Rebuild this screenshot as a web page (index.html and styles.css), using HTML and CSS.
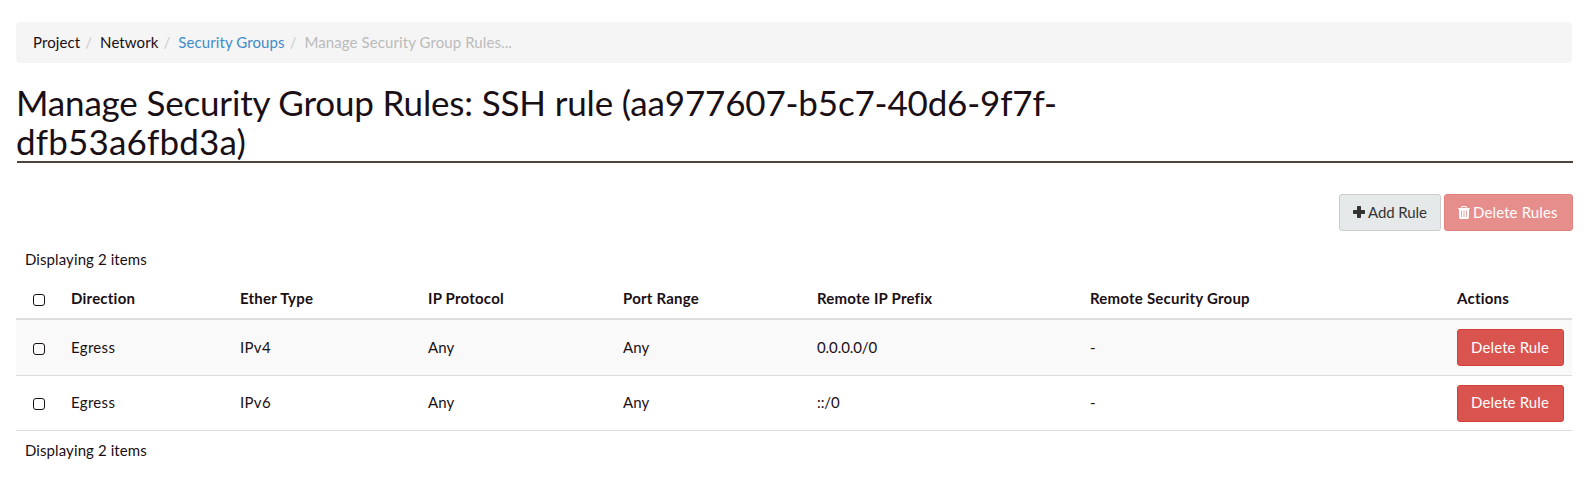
FILE: index.html
```html
<!DOCTYPE html>
<html lang="en">
<head>
<meta charset="utf-8">
<title>Manage Security Group Rules</title>
<link rel="stylesheet" href="styles.css">
</head>
<body>
<ol class="breadcrumb">
  <li>Project</li>
  <li>Network</li>
  <li><a href="#">Security Groups</a></li>
  <li class="active">Manage Security Group Rules...</li>
</ol>
<header class="page-header">
  <h1><span class="title-main">Manage Security Group Rules: SSH rule (aa977607-b5c7-40d6-9f7f-</span><span class="title-rest">dfb53a6fbd3a)</span></h1>
</header>
<div class="table-actions">
  <button class="btn btn-default"><svg class="icon-plus" viewBox="0 0 12 12"><path d="M4.8 0h2.4q.8 0 .8.8V4h3.2q.8 0 .8.8v2.4q0 .8-.8.8H8v3.200q0 .8-.8.8H4.800q-.8 0-.8-.8V8H.8Q0 8 0 7.200V4.800Q0 4 .8 4H4V.8Q4 0 4.800 0z"/></svg><span>Add Rule</span></button>
  <button class="btn btn-danger btn-delete-all" disabled><svg class="icon-trash" viewBox="0 0 12 13"><path fill-rule="evenodd" d="M4.300 0h3.400q.6 0 .8.500L9 2h2.600q.4 0 .4.400V3H11v8.300Q11 13 9.500 13h-7Q1 13 1 11.300V3H0v-.6Q0 2 .4 2H3L3.500.5Q3.700 0 4.300 0zM4.400 1 4 2h4l-.4-1zM3.200 4.500V11h.8V4.500zm2.400 0V11h.8V4.500zm2.400 0V11h.8V4.500z"/></svg><span>Delete Rules</span></button>
</div>
<div class="table-info table-info-top">Displaying 2 items</div>
<table class="rules">
  <colgroup><col class="col-check"><col class="col-direction"><col class="col-ether"><col class="col-protocol"><col class="col-port"><col class="col-prefix"><col class="col-group"><col class="col-actions"></colgroup>
  <thead>
    <tr><th><span class="check"></span></th><th>Direction</th><th>Ether Type</th><th>IP Protocol</th><th>Port Range</th><th>Remote IP Prefix</th><th>Remote Security Group</th><th>Actions</th></tr>
  </thead>
  <tbody>
    <tr class="odd"><td><span class="check"></span></td><td class="label">Egress</td><td class="label">IPv4</td><td>Any</td><td>Any</td><td class="address">0.0.0.0/0</td><td>-</td><td><button class="btn btn-danger">Delete Rule</button></td></tr>
    <tr class="even"><td><span class="check"></span></td><td class="label">Egress</td><td class="label">IPv6</td><td>Any</td><td>Any</td><td class="address">::/0</td><td>-</td><td class="action"><button class="btn btn-danger">Delete Rule</button></td></tr>
  </tbody>
</table>
<div class="table-info table-info-bottom">Displaying 2 items</div>
</body>
</html>
```
FILE: styles.css
```css
* { box-sizing: border-box; }
body {
  margin: 0;
  padding: 22px 15px 0 16px;
  background: #fff;
  color: #1a0f14;
  font: 15px/21px Lato, sans-serif;
  letter-spacing: .09px;
}
.breadcrumb {
  display: flex;
  height: 41px;
  margin: 0 1px 20px 0;
  padding: 10px 17px;
  list-style: none;
  background: #f5f5f5;
  border-radius: 4px;
}
.breadcrumb li + li::before {
  content: "/";
  padding: 0 8px 0 5px;
  color: #ccc;
}
.breadcrumb a { color: #428bca; text-decoration: none; }
.breadcrumb .active { color: #bbb; }
.page-header {
  height: 80px;
  margin-left: 1px;
  border-bottom: 2px solid #51443c;
}
h1 {
  margin: 0 0 0 -1px;
  font-size: 35px;
  font-weight: 400;
  line-height: 39px;
}
h1 span { display: block; }
.title-main { letter-spacing: -.17px; }
.title-rest { letter-spacing: .18px; }
.table-actions {
  display: flex;
  justify-content: flex-end;
  gap: 3px;
  margin-top: 31px;
}
.btn {
  display: flex;
  align-items: center;
  height: 37px;
  padding: 0 13px 1px;
  border: 1px solid;
  border-radius: 3px;
  font: inherit;
  letter-spacing: .13px;
  white-space: nowrap;
}
.btn-default { width: 102px; background: #e5e9ea; border-color: #ccc; color: #333; letter-spacing: -.08px; }
.btn-danger { background: #d9534f; border-color: #d43f3a; color: #fff; }
.btn-danger:disabled { opacity: .65; }
.btn-delete-all { width: 129px; }
td .btn { width: 107px; }
.btn svg { fill: currentColor; }
.icon-plus { width: 12px; height: 12px; margin-right: 3px; }
.icon-trash { width: 12px; height: 13px; margin-right: 3px; }
.table-info { padding-left: 9px; }
.table-info-top { margin-top: 18px; }
.table-info-bottom { margin-top: 9px; }
.rules {
  width: 1556px;
  margin-top: 8px;
  table-layout: fixed;
  border-collapse: separate;
  border-spacing: 0;
}
.col-check { width: 47px; }
.col-direction { width: 169px; }
.col-ether { width: 188px; }
.col-protocol { width: 195px; }
.col-port { width: 194px; }
.col-prefix { width: 273px; }
.col-group { width: 367px; }
.col-actions { width: 123px; }
th, td { padding: 0 8px; text-align: left; vertical-align: middle; }
th { height: 42px; border-bottom: 2px solid #ddd; font-weight: 700; letter-spacing: .22px; }
td { border-bottom: 1px solid #ddd; }
.odd td { height: 56px; background: #f9f9f9; }
.even td { height: 55px; padding-bottom: 2px; }
.even .action { padding-bottom: 0; }
.label { letter-spacing: .32px; }
.address { letter-spacing: -.08px; }
.check {
  display: block;
  width: 12px;
  height: 12px;
  margin: 3px 0 0 9px;
  border: 1px solid #1a0f14;
  border-radius: 3px;
}
.odd .check { margin-top: 2px; }
```
